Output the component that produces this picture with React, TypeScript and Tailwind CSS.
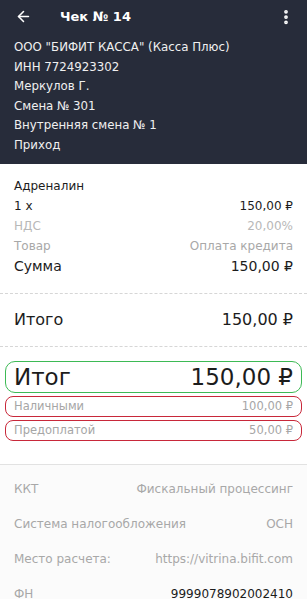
import { ArrowLeft, EllipsisVertical } from "lucide-react";

const headerLines = [
  'ООО "БИФИТ КАССА" (Касса Плюс)',
  "ИНН 7724923302",
  "Меркулов Г.",
  "Смена № 301",
  "Внутренняя смена № 1",
  "Приход",
];

const fiscal = [
  { label: "ККТ", value: "Фискальный процессинг", dark: false },
  { label: "Система налогообложения", value: "ОСН", dark: false },
  { label: "Место расчета:", value: "https://vitrina.bifit.com", dark: false },
  { label: "ФН", value: "9999078902002410", dark: true },
];

function Dashed() {
  return <div className="h-0 border-t border-dashed border-[#d6d6d6]" />;
}

export default function App() {
  return (
    <main
      className="h-[599px] w-[307px] overflow-hidden bg-white text-[#1c1c1c]"
      style={{ fontFamily: '"DejaVu Sans", sans-serif' }}
    >
      {/* Header */}
      <section className="h-[164px] bg-[#272c3a] text-white">
        <div className="flex h-[33px] items-center pl-[15px] pr-[12px]">
          <ArrowLeft className="h-[17px] w-[17px]" strokeWidth={2.2} />
          <h1 className="ml-[28px] text-[13px] font-bold">Чек № 14</h1>
          <EllipsisVertical className="ml-auto h-[18px] w-[18px]" strokeWidth={3} />
        </div>
        <div className="mt-[5px] px-[14px] text-[11.8px] leading-[19.5px] text-[#f0f0f0]">
          {headerLines.map((line) => (
            <p key={line}>{line}</p>
          ))}
        </div>
      </section>

      {/* Item */}
      <section className="px-[14px] pt-[12px] pb-[16px] text-[12px] leading-[20px]">
        <p>Адреналин</p>
        <div className="flex justify-between">
          <span>1 x</span>
          <span>150,00 ₽</span>
        </div>
        <div className="flex justify-between text-[#b8b8b8]">
          <span>НДС</span>
          <span>20,00%</span>
        </div>
        <div className="flex justify-between text-[#a8a8a8]">
          <span>Товар</span>
          <span>Оплата кредита</span>
        </div>
        <div className="flex justify-between text-[14px] leading-[21px]">
          <span>Сумма</span>
          <span>150,00 ₽</span>
        </div>
      </section>
      <Dashed />
      <div className="flex h-[52px] items-center justify-between px-[14px] text-[16px]">
        <span>Итого</span>
        <span>150,00 ₽</span>
      </div>
      <Dashed />

      {/* Totals */}
      <section className="px-[5px] pt-[14px] pb-[23px]">
        <div className="flex h-[32px] items-center justify-between rounded-[10px] border-[1.5px] border-[#3dba55] px-[8px] text-[23px]">
          <span>Итог</span>
          <span>150,00 ₽</span>
        </div>
        <div className="mt-[3px] flex h-[21px] items-center justify-between rounded-[8px] border-[1.5px] border-[#c8283a] px-[8px] text-[11.5px] text-[#a6a6a6]">
          <span>Наличными</span>
          <span>100,00 ₽</span>
        </div>
        <div className="mt-[3px] flex h-[21px] items-center justify-between rounded-[8px] border-[1.5px] border-[#c8283a] px-[8px] text-[11.5px] text-[#a6a6a6]">
          <span>Предоплатой</span>
          <span>50,00 ₽</span>
        </div>
      </section>

      {/* Fiscal data */}
      <section className="border-t border-[#e2e2e2] bg-[#fbfbfb] px-[14px] pt-[6px] text-[12px]">
        {fiscal.map((row) => (
          <div key={row.label} className="flex h-[35px] items-center justify-between">
            <span className="text-[#a8a8a8]">{row.label}</span>
            <span className={row.dark ? "text-[#1c1c1c]" : "text-[#a8a8a8]"}>{row.value}</span>
          </div>
        ))}
      </section>
    </main>
  );
}
